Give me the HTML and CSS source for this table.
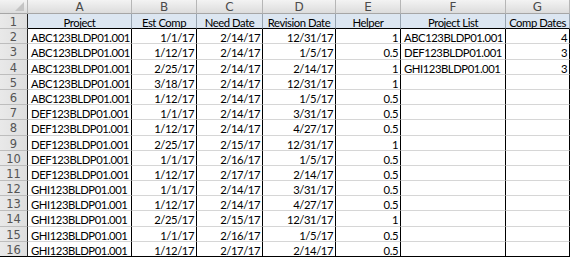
FILE: index.html
```html
<!DOCTYPE html>
<html>
<head>
<meta charset="utf-8">
<link rel="stylesheet" href="styles.css">
</head>
<body>
<div class="sheet">
  <div class="ch corner"><span class="tri"></span></div>
  <div class="ch">A</div><div class="ch">B</div><div class="ch">C</div><div class="ch">D</div><div class="ch">E</div><div class="ch">F</div><div class="ch">G</div>

  <div class="rh">1</div>
  <div class="c h1">Project</div><div class="c h1">Est Comp</div><div class="c h1">Need Date</div><div class="c h1">Revision Date</div><div class="c h1">Helper</div><div class="c h1">Project List</div><div class="c h1">Comp Dates</div>

  <div class="rh">2</div>
  <div class="c">ABC123BLDP01.001</div><div class="c r">1/1/17</div><div class="c r">2/14/17</div><div class="c r">12/31/17</div><div class="c r">1</div><div class="c">ABC123BLDP01.001</div><div class="c r">4</div>
  <div class="rh">3</div>
  <div class="c">ABC123BLDP01.001</div><div class="c r">1/12/17</div><div class="c r">2/14/17</div><div class="c r">1/5/17</div><div class="c r">0.5</div><div class="c">DEF123BLDP01.001</div><div class="c r">3</div>
  <div class="rh">4</div>
  <div class="c">ABC123BLDP01.001</div><div class="c r">2/25/17</div><div class="c r">2/14/17</div><div class="c r">2/14/17</div><div class="c r">1</div><div class="c">GHI123BLDP01.001</div><div class="c r">3</div>
  <div class="rh">5</div>
  <div class="c">ABC123BLDP01.001</div><div class="c r">3/18/17</div><div class="c r">2/14/17</div><div class="c r">12/31/17</div><div class="c r">1</div><div class="c"></div><div class="c"></div>
  <div class="rh">6</div>
  <div class="c">ABC123BLDP01.001</div><div class="c r">1/12/17</div><div class="c r">2/14/17</div><div class="c r">1/5/17</div><div class="c r">0.5</div><div class="c"></div><div class="c"></div>
  <div class="rh">7</div>
  <div class="c">DEF123BLDP01.001</div><div class="c r">1/1/17</div><div class="c r">2/14/17</div><div class="c r">3/31/17</div><div class="c r">0.5</div><div class="c"></div><div class="c"></div>
  <div class="rh">8</div>
  <div class="c">DEF123BLDP01.001</div><div class="c r">1/12/17</div><div class="c r">2/14/17</div><div class="c r">4/27/17</div><div class="c r">0.5</div><div class="c"></div><div class="c"></div>
  <div class="rh">9</div>
  <div class="c">DEF123BLDP01.001</div><div class="c r">2/25/17</div><div class="c r">2/15/17</div><div class="c r">12/31/17</div><div class="c r">1</div><div class="c"></div><div class="c"></div>
  <div class="rh">10</div>
  <div class="c">DEF123BLDP01.001</div><div class="c r">1/1/17</div><div class="c r">2/16/17</div><div class="c r">1/5/17</div><div class="c r">0.5</div><div class="c"></div><div class="c"></div>
  <div class="rh">11</div>
  <div class="c">DEF123BLDP01.001</div><div class="c r">1/12/17</div><div class="c r">2/17/17</div><div class="c r">2/14/17</div><div class="c r">0.5</div><div class="c"></div><div class="c"></div>
  <div class="rh">12</div>
  <div class="c">GHI123BLDP01.001</div><div class="c r">1/1/17</div><div class="c r">2/14/17</div><div class="c r">3/31/17</div><div class="c r">0.5</div><div class="c"></div><div class="c"></div>
  <div class="rh">13</div>
  <div class="c">GHI123BLDP01.001</div><div class="c r">1/12/17</div><div class="c r">2/14/17</div><div class="c r">4/27/17</div><div class="c r">0.5</div><div class="c"></div><div class="c"></div>
  <div class="rh">14</div>
  <div class="c">GHI123BLDP01.001</div><div class="c r">2/25/17</div><div class="c r">2/15/17</div><div class="c r">12/31/17</div><div class="c r">1</div><div class="c"></div><div class="c"></div>
  <div class="rh">15</div>
  <div class="c">GHI123BLDP01.001</div><div class="c r">1/1/17</div><div class="c r">2/16/17</div><div class="c r">1/5/17</div><div class="c r">0.5</div><div class="c"></div><div class="c"></div>
  <div class="rh last">16</div>
  <div class="c last">GHI123BLDP01.001</div><div class="c r last">1/12/17</div><div class="c r last">2/17/17</div><div class="c r last">2/14/17</div><div class="c r last">0.5</div><div class="c last"></div><div class="c last"></div>
</div>
</body>
</html>
```
FILE: styles.css
```css
html, body {
  margin: 0;
  padding: 0;
  background: #ffffff;
}
.sheet {
  display: grid;
  grid-template-columns: 28px 104px 65px 66px 73px 65px 105px 64px;
  grid-template-rows: 14px repeat(16, 15.2px);
  width: 570px;
  font-family: Lato, "Open Sans", sans-serif;
  font-size: 11.3px;
  letter-spacing: -0.45px;
  color: #000;
}
.sheet > div {
  box-sizing: border-box;
  white-space: nowrap;
}
.ch {
  background: linear-gradient(#f3f3f3, #dcdcdc);
  border-right: 1px solid #b6b6b6;
  border-bottom: 1px solid #a6a6a6;
  font-family: "DejaVu Sans", sans-serif;
  font-size: 12px;
  letter-spacing: 0;
  color: #4a4a4a;
  text-align: center;
  line-height: 11px;
  padding-top: 2px;
}
.corner {
  position: relative;
}
.tri {
  position: absolute;
  right: 3px;
  bottom: 2px;
  width: 0;
  height: 0;
  border-left: 9px solid transparent;
  border-bottom: 9px solid #c4c4c4;
}
.rh {
  background: linear-gradient(90deg, #e9e9e9, #dedede);
  border-right: 1px solid #222;
  border-bottom: 1px solid #bdbdbd;
  font-family: "DejaVu Sans", sans-serif;
  font-size: 11.5px;
  letter-spacing: 0;
  color: #555;
  text-align: center;
  line-height: 11px;
  padding-top: 3px;
}
.c {
  border-right: 1px solid #000;
  border-bottom: 1px solid #d6d6d6;
  padding: 3px 2px 0 3px;
  line-height: 11px;
}
.c.r {
  text-align: right;
}
.c.h1 {
  background: #dce6f1;
  border-right: 1px solid #98a4b0;
  border-bottom: 1px solid #000;
  text-align: center;
  padding: 3px 1px 0;
}
.c.last, .rh.last {
  border-bottom: 1px solid #000;
}
```
